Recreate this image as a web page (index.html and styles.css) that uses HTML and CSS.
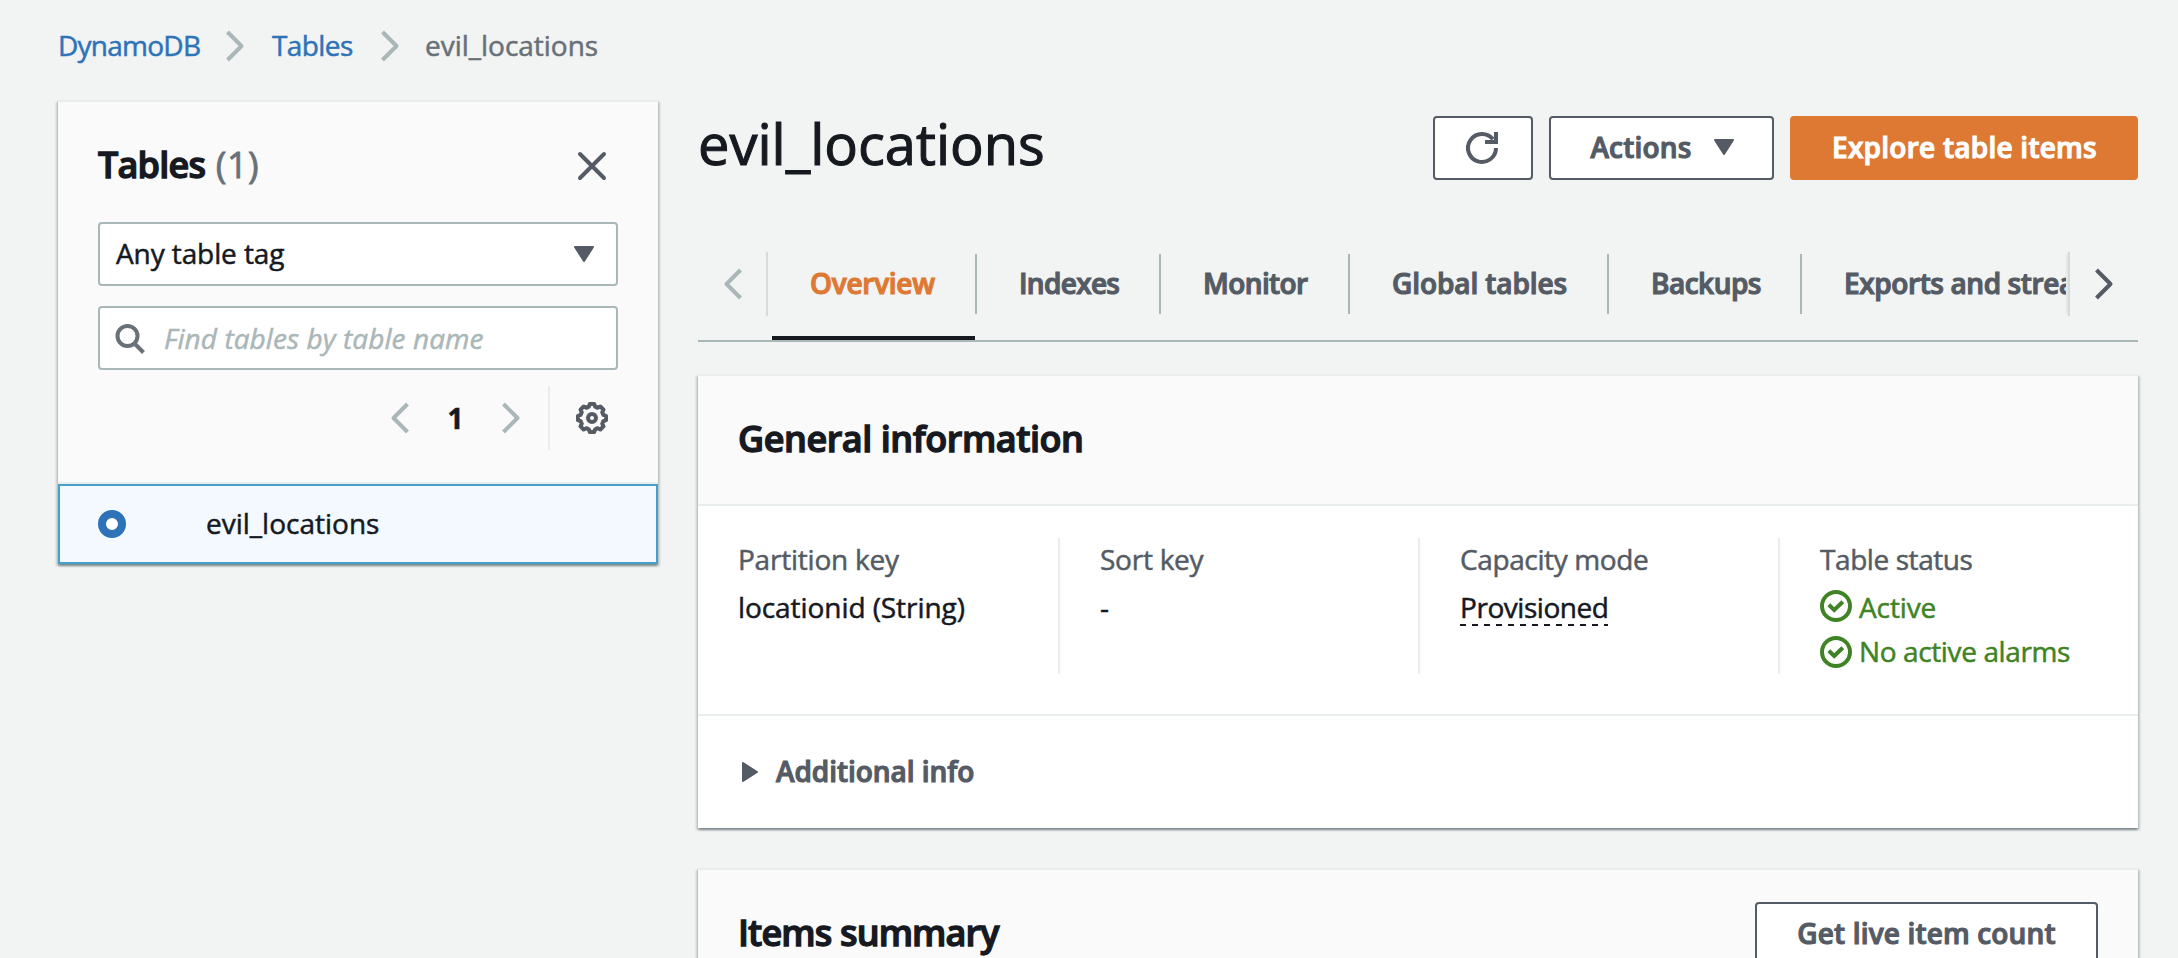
FILE: index.html
```html
<!DOCTYPE html>
<html lang="en">
<head>
<meta charset="utf-8">
<title>DynamoDB - evil_locations</title>
<link rel="stylesheet" href="styles.css">
</head>
<body>
<nav class="breadcrumbs">
  <a class="crumb crumb-service">DynamoDB</a>
  <svg class="chevron muted" viewBox="0 0 20 32"><path d="M2.5 2 16.5 16 2.5 30"/></svg>
  <a class="crumb crumb-tables">Tables</a>
  <svg class="chevron muted" viewBox="0 0 20 32"><path d="M2.5 2 16.5 16 2.5 30"/></svg>
  <span class="crumb current">evil_locations</span>
</nav>
<div class="layout">
  <aside class="card side">
    <div class="side-head">
      <div class="side-title">
        <h2 class="h2-tables">Tables <span class="count">(1)</span></h2>
        <svg class="close" viewBox="0 0 32 32"><path d="M4 4 28 28M28 4 4 28"/></svg>
      </div>
      <div class="field select"><span class="select-text">Any table tag</span>
        <svg class="caret" viewBox="0 0 22 18"><path d="M2 2H20L11 16Z"/></svg></div>
      <div class="field search">
        <svg class="magnifier" viewBox="0 0 32 32"><circle cx="13.5" cy="13" r="10"/><path d="M20.5 20.5 29.5 29.5"/></svg>
        <span class="placeholder">Find tables by table name</span></div>
      <div class="pager">
        <svg class="chevron muted" viewBox="0 0 20 32"><path d="M17.5 2 3.5 16 17.5 30"/></svg>
        <b class="page">1</b>
        <svg class="chevron muted" viewBox="0 0 20 32"><path d="M2.5 2 16.5 16 2.5 30"/></svg>
        <i class="rule"></i>
        <svg class="gear" viewBox="0 0 32 32"><path d="M12.8 4.7 13.8 2H18.2L19.2 4.7 21.7 5.8 24.3 4.5 27.5 7.7 26.2 10.3 27.3 12.8 30 13.8V18.2L27.3 19.2 26.2 21.7 27.5 24.3 24.3 27.5 21.7 26.2 19.2 27.3 18.2 30H13.8L12.8 27.3 10.3 26.2 7.7 27.5 4.5 24.3 5.8 21.7 4.7 19.2 2 18.2V13.8L4.7 12.8 5.8 10.3 4.5 7.7 7.7 4.5 10.3 5.8Z"/><circle cx="16" cy="16" r="4"/></svg>
      </div>
    </div>
    <div class="row"><i class="radio"></i><span class="row-name">evil_locations</span></div>
  </aside>

  <main class="main">
    <header class="top">
      <h1>evil_locations</h1>
      <div class="buttons">
        <button class="btn btn-refresh"><svg class="refresh" viewBox="0 0 32 32"><path d="M30 16A14 14 0 1 1 27 7.3"/><path d="M30 0V10H19"/></svg></button>
        <button class="btn btn-actions"><span>Actions</span><svg class="caret" viewBox="0 0 22 18"><path d="M2 2H20L11 16Z"/></svg></button>
        <button class="btn btn-primary">Explore table items</button>
      </div>
    </header>

    <div class="tabs">
      <div class="tab-nav prev"><svg class="chevron muted" viewBox="0 0 20 32"><path d="M17.5 2 3.5 16 17.5 30"/></svg></div>
      <div class="tab-list">
        <div class="tab t-overview active"><span>Overview</span></div>
        <div class="tab t-indexes"><span>Indexes</span></div>
        <div class="tab t-monitor"><span>Monitor</span></div>
        <div class="tab t-global"><span>Global tables</span></div>
        <div class="tab t-backups"><span>Backups</span></div>
        <div class="tab t-exports"><span>Exports and streams</span></div>
      </div>
      <div class="tab-nav next"><svg class="chevron dark" viewBox="0 0 20 32"><path d="M2.5 2 16.5 16 2.5 30"/></svg></div>
    </div>

    <section class="card general">
      <div class="card-head"><h2 class="h2-general">General information</h2></div>
      <div class="columns">
        <div class="col"><div class="label l-partition">Partition key</div><div class="value">locationid (String)</div></div>
        <div class="col"><div class="label l-sort">Sort key</div><div class="value">-</div></div>
        <div class="col"><div class="label l-capacity">Capacity mode</div><div class="value"><span class="dashed">Provisioned</span></div></div>
        <div class="col"><div class="label l-status">Table status</div>
          <div class="status"><svg class="check" viewBox="0 0 32 32"><circle cx="16" cy="16" r="14"/><path d="M8.8 14.8 14.2 20 22.8 11.8"/></svg><span class="s-active">Active</span></div>
          <div class="status second"><svg class="check" viewBox="0 0 32 32"><circle cx="16" cy="16" r="14"/><path d="M8.8 14.8 14.2 20 22.8 11.8"/></svg><span class="s-alarms">No active alarms</span></div>
        </div>
      </div>
      <div class="expander"><svg class="caret-right" viewBox="0 0 18 22"><path d="M2 2V20L16 11Z"/></svg><span>Additional info</span></div>
    </section>

    <section class="card summary">
      <div class="summary-head"><h2 class="h2-items">Items summary</h2><button class="btn btn-count">Get live item count</button></div>
    </section>
  </main>
</div>
</body>
</html>
```
FILE: styles.css
```css
* { box-sizing: border-box; }
html, body { height: 100%; }
body {
  margin: 0;
  overflow: hidden;
  background: #f2f3f3;
  color: #16191f;
  font: 28px/44px "Open Sans", "Noto Sans", sans-serif;
  -webkit-text-stroke: .5px currentColor;
  white-space: nowrap;
}
h1, h2 { margin: 0; }
h2 { padding-top: 1px; font-size: 36px; line-height: 44px; font-weight: 600; -webkit-text-stroke: 1.3px currentColor; }
svg { display: block; flex: none; overflow: visible; fill: none; }

.breadcrumbs { display: flex; align-items: center; height: 100px; padding: 0 0 10px 58px; }
.crumb { color: #2e73b8; }
.crumb-service { width: 167px; letter-spacing: -.75px; }
.crumb-tables { width: 108px; margin-left: 27px; letter-spacing: -.6px; }
.breadcrumbs .chevron { margin-top: 2px; }
.current { margin-left: 25px; color: #687078; letter-spacing: -.02px; }

.chevron { width: 20px; height: 32px; stroke-width: 4; stroke-linejoin: round; }
.muted { stroke: #aab7b8; }
.dark { stroke: #545b64; }
.caret { width: 22px; height: 18px; fill: #545b64; stroke: #545b64; stroke-width: 2; stroke-linejoin: round; }

.layout { display: flex; align-items: flex-start; gap: 40px; height: 858px; padding-left: 58px; }
.card {
  background: #fff;
  border-top: 2px solid #eaeded;
  box-shadow: 0 2px 2px rgba(0,28,36,.3), 2px 2px 2px rgba(0,28,36,.15), -2px 2px 2px rgba(0,28,36,.15);
}
.side { width: 600px; }
.side-head { height: 382px; padding: 40px 40px 0; background: #fafafa; border-bottom: 2px solid #eaeded; }
.side-title { display: flex; justify-content: space-between; height: 80px; }
.h2-tables { letter-spacing: -.8px; }
.count { margin-left: 2px; color: #687078; font-weight: 400; letter-spacing: .6px; -webkit-text-stroke: .8px currentColor; }
.close { width: 32px; height: 32px; margin: 8px 10px 0 0; stroke: #545b64; stroke-width: 4; stroke-linecap: round; }
.field { display: flex; align-items: center; height: 64px; border: 2px solid #aab7b8; border-radius: 4px; background: #fff; }
.select { justify-content: space-between; padding: 0 21px 0 16px; }
.select-text { margin-top: -2px; letter-spacing: -.1px; }
.search { margin-top: 20px; padding-left: 14px; }
.magnifier { width: 32px; height: 32px; margin-top: 1px; stroke: #687078; stroke-width: 4; }
.placeholder { margin: -1px 0 0 18px; color: #aab7b8; font-style: italic; letter-spacing: .07px; }
.pager { display: flex; align-items: center; justify-content: flex-end; height: 64px; margin-top: 16px; padding-right: 10px; }
.page { width: 91px; margin-top: -1px; text-align: center; font-weight: 700; }
.rule { width: 2px; height: 64px; margin: 0 26px 0 27px; background: #eaeded; }
.gear { width: 32px; height: 32px; stroke: #545b64; stroke-width: 4; stroke-linejoin: round; }
.row { display: flex; align-items: center; height: 80px; padding-left: 38px; border: 2px solid #45a1c8; background: #f3f9fe; }
.radio { width: 28px; height: 28px; border: 8px solid #2e73b8; border-radius: 50%; background: #fff; }
.row-name { margin: -2px 0 0 80px; }

.main { width: 1440px; height: 858px; overflow: hidden; margin: 0 -4px; padding: 0 4px; box-sizing: content-box; }
.top { display: flex; justify-content: space-between; height: 152px; padding-top: 16px; }
h1 { padding-top: 1px; font-size: 56px; line-height: 52px; font-weight: 400; -webkit-text-stroke: 1.1px currentColor; }
.buttons { display: flex; gap: 16px; }
.btn {
  display: flex; align-items: center; justify-content: center;
  height: 64px; padding: 0 0 2px; border: 2px solid #545b64; border-radius: 4px;
  background: #fff; color: #545b64; font: 600 28px/44px "Open Sans", "Noto Sans", sans-serif;
  -webkit-text-stroke: 1.1px currentColor;
}
.btn-refresh { width: 100px; padding: 0; }
.refresh { width: 32px; height: 32px; margin-left: -2px; stroke: #545b64; stroke-width: 4; }
.btn-actions { width: 225px; padding-left: 2px; gap: 21px; letter-spacing: .2px; }
.btn-primary { width: 348px; padding-left: 1px; border-color: #dd7933; background: #dd7933; color: #fff; letter-spacing: .25px; }

.tabs { display: flex; height: 90px; border-bottom: 2px solid #aab7b8; }
.tab-nav { display: flex; flex: none; align-items: center; height: 64px; }
.prev { width: 70px; padding-left: 25px; border-right: 2px solid #d5dbdb; }
.next { width: 70px; padding-left: 24px; border-left: 2px solid #d5dbdb; box-shadow: -3px 0 3px -2px rgba(0,28,36,.1); }
.tab-list { display: flex; flex: 1; min-width: 0; margin-right: 2px; padding-left: 4px; overflow: hidden; }
.tab {
  flex: none; height: 88px; padding-top: 2px; color: #545b64; font-weight: 600;
  -webkit-text-stroke: 1.1px currentColor;
}
.tab span { display: block; height: 60px; padding: 7px 0 0 42px; border-right: 2px solid #aab7b8; }
.active { border-bottom: 4px solid #16191f; color: #dd7933; }
.t-overview { width: 203px; margin-right: 2px; letter-spacing: -.27px; }
.t-overview span { width: 205px; padding-left: 38px; }
.t-indexes { width: 184px; letter-spacing: -.68px; }
.t-monitor { width: 189px; letter-spacing: -.6px; }
.t-global { width: 259px; letter-spacing: -.1px; }
.t-backups { width: 193px; letter-spacing: -.5px; }
.tab.t-exports { width: 360px; letter-spacing: -.4px; }

.general { margin-top: 32px; }
.card-head { height: 130px; padding: 40px 40px 0; background: #fafafa; border-bottom: 2px solid #eaeded; }
.h2-general { letter-spacing: -.45px; }
.columns { display: grid; grid-template-columns: repeat(4, 360px); height: 208px; padding-top: 32px; }
.col { height: 136px; padding-left: 40px; border-left: 2px solid #eaeded; }
.col:first-child { padding-left: 38px; border-color: transparent; }
.label { height: 48px; margin-top: -1px; color: #545b64; }
.value { letter-spacing: -.07px; }
.l-partition { letter-spacing: -.22px; }
.l-sort { letter-spacing: -.25px; }
.l-capacity { letter-spacing: -.38px; }
.l-status { letter-spacing: -.42px; }
.dashed {
  display: block; width: 148px; height: 41px; letter-spacing: -.45px;
  background: repeating-linear-gradient(90deg, #16191f 0 6px, transparent 6px 12px) 0 100% / 100% 2px no-repeat;
}
.status { display: flex; align-items: center; height: 44px; color: #3f8324; }
.check { width: 32px; height: 32px; stroke: #3f8324; stroke-width: 4; margin-top: -2px; }
.second .check { margin-top: 2px; }
.s-active { margin-left: 7px; letter-spacing: -.11px; }
.s-alarms { margin-left: 7px; letter-spacing: -.38px; }
.expander {
  display: flex; align-items: center; height: 114px; padding: 0 0 2px 43px; border-top: 2px solid #eaeded;
  color: #545b64; font-weight: 600; -webkit-text-stroke: 1.1px currentColor;
}
.caret-right { width: 18px; height: 22px; margin: 2px 17px 0 0; fill: #545b64; stroke: #545b64; stroke-width: 2; stroke-linejoin: round; }
.expander span { letter-spacing: -.05px; }

.summary { height: 90px; margin-top: 40px; background: #fafafa; overflow: hidden; }
.summary-head { display: flex; justify-content: space-between; padding: 32px 40px 0; }
.h2-items { margin: 8px 0 0; letter-spacing: -.87px; }
.btn-count { width: 343px; letter-spacing: .15px; }
```
